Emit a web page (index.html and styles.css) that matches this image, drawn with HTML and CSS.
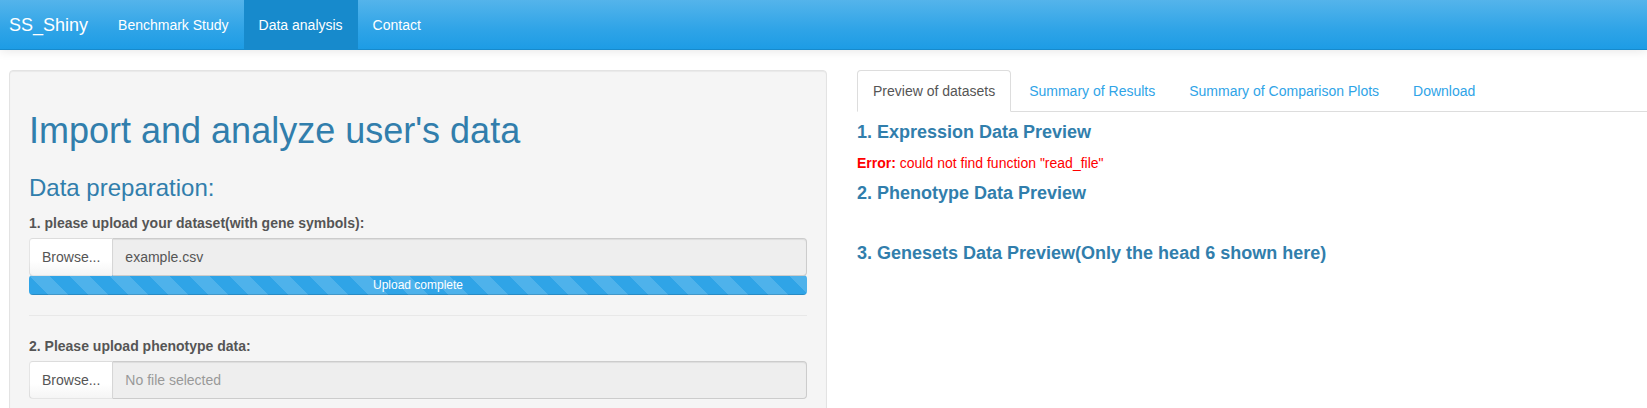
FILE: index.html
```html
<!DOCTYPE html>
<html>
<head>
<meta charset="utf-8">
<title>SS_Shiny</title>
<link rel="stylesheet" href="styles.css">
</head>
<body>
<nav class="navbar">
  <span class="brand">SS_Shiny</span>
  <ul class="nav">
    <li><a class="nav-link">Benchmark Study</a></li>
    <li><a class="nav-link active">Data analysis</a></li>
    <li><a class="nav-link">Contact</a></li>
  </ul>
</nav>
<div class="main">
  <div class="well">
    <h1 class="title">Import and analyze user's data</h1>
    <h3 class="subtitle">Data preparation:</h3>
    <div class="form-group">
      <label class="label">1. please upload your dataset(with gene symbols):</label>
      <div class="input-group">
        <span class="btn">Browse...</span>
        <span class="file-name">example.csv</span>
      </div>
      <div class="progress"><div class="progress-bar">Upload complete</div></div>
    </div>
    <hr class="divider">
    <div class="form-group">
      <label class="label">2. Please upload phenotype data:</label>
      <div class="input-group">
        <span class="btn">Browse...</span>
        <span class="file-name placeholder">No file selected</span>
      </div>
    </div>
  </div>
  <div class="content">
    <ul class="tabs">
      <li class="tab active">Preview of datasets</li>
      <li class="tab">Summary of Results</li>
      <li class="tab">Summary of Comparison Plots</li>
      <li class="tab">Download</li>
    </ul>
    <h4 class="section">1. Expression Data Preview</h4>
    <div class="error"><b>Error:</b> could not find function "read_file"</div>
    <h4 class="section">2. Phenotype Data Preview</h4>
    <div class="empty-output"></div>
    <h4 class="section">3. Genesets Data Preview(Only the head 6 shown here)</h4>
  </div>
</div>
</body>
</html>
```

FILE: styles.css
```css
* { box-sizing: border-box; }
html, body {
  margin: 0;
  padding: 0;
  background: #fff;
  font-family: "Liberation Sans", Arial, sans-serif;
  font-size: 14px;
  line-height: 20px;
  color: #555555;
  overflow: hidden;
}
.navbar {
  display: flex;
  height: 50px;
  background-image: linear-gradient(#54b4eb, #2fa4e7 60%, #1d9ce5);
  border-bottom: 1px solid #178acc;
  box-shadow: 0 1px 10px rgba(0, 0, 0, 0.1);
}
.brand {
  display: block;
  padding: 15px 15px 14px 9px;
  font-size: 18px;
  line-height: 20px;
  color: #fff;
}
.nav {
  display: flex;
  list-style: none;
  margin: 0;
  padding: 0;
}
.nav-link {
  display: block;
  padding: 15px 15px 14px;
  color: #fff;
  line-height: 20px;
}
.nav-link.active { background-color: #178acc; }

.main {
  display: flex;
  align-items: flex-start;
  gap: 30px;
  margin-top: 20px;
  padding-left: 9px;
}
.well {
  flex: 0 0 818px;
  min-height: 400px;
  padding: 19px;
  background: #f5f5f5;
  border: 1px solid #e3e3e3;
  border-radius: 4px;
  box-shadow: inset 0 1px 1px rgba(0, 0, 0, 0.05);
}
.title {
  margin: 21px 0 0;
  font-size: 36px;
  line-height: 40px;
  font-weight: 400;
  color: #317eac;
}
.subtitle {
  margin: 24px 0 12px;
  font-size: 24px;
  line-height: 26px;
  font-weight: 400;
  color: #317eac;
}
.form-group { margin-bottom: 15px; }
.label {
  display: block;
  margin-bottom: 5px;
  font-weight: 700;
  color: #555;
}
.input-group {
  display: flex;
  height: 38px;
}
.btn {
  flex: 0 0 auto;
  padding: 8px 12px;
  line-height: 20px;
  color: #555;
  background-image: linear-gradient(#fff, #fff 60%, #f5f5f5);
  border: 1px solid rgba(0, 0, 0, 0.1);
  border-right: 1px solid #d6d6d6;
  border-radius: 4px 0 0 4px;
}
.file-name {
  flex: 1;
  padding: 8px 12px;
  line-height: 20px;
  color: #555;
  background: #eeeeee;
  border: 1px solid #cccccc;
  border-left: 0;
  border-radius: 0 4px 4px 0;
  box-shadow: inset 0 1px 1px rgba(0, 0, 0, 0.075);
}
.file-name.placeholder { color: #999; }
.progress {
  height: 20px;
  margin-top: -1px;
  border-radius: 4px;
  background: #f5f5f5;
  overflow: hidden;
}
.progress-bar {
  height: 20px;
  width: 100%;
  font-size: 12px;
  line-height: 20px;
  color: #fff;
  text-align: center;
  background-color: #2fa4e7;
  background-image: linear-gradient(45deg, rgba(255,255,255,.15) 25%, transparent 25%, transparent 50%, rgba(255,255,255,.15) 50%, rgba(255,255,255,.15) 75%, transparent 75%, transparent);
  background-size: 40px 40px;
  box-shadow: inset 0 -1px 0 rgba(0, 0, 0, 0.15);
}
.divider {
  margin: 20px 0 20px;
  border: 0;
  border-top: 1px solid #e8e8e8;
}

.content {
  flex: 1;
  min-width: 0;
}
.tabs {
  display: flex;
  list-style: none;
  margin: 0;
  padding: 0;
  border-bottom: 1px solid #dddddd;
}
.tab {
  margin-right: 2px;
  margin-bottom: -1px;
  padding: 10px 15px;
  line-height: 20px;
  color: #2fa4e7;
  border: 1px solid transparent;
  border-radius: 4px 4px 0 0;
}
.tab.active {
  color: #555;
  background: #fff;
  border-color: #dddddd #dddddd transparent;
}
.section {
  margin: 10px 0 10px;
  font-size: 18px;
  line-height: 20px;
  font-weight: 700;
  color: #317eac;
}
.error {
  color: red;
  line-height: 20px;
  padding-top: 1px;
}
.empty-output { height: 20px; }
```
